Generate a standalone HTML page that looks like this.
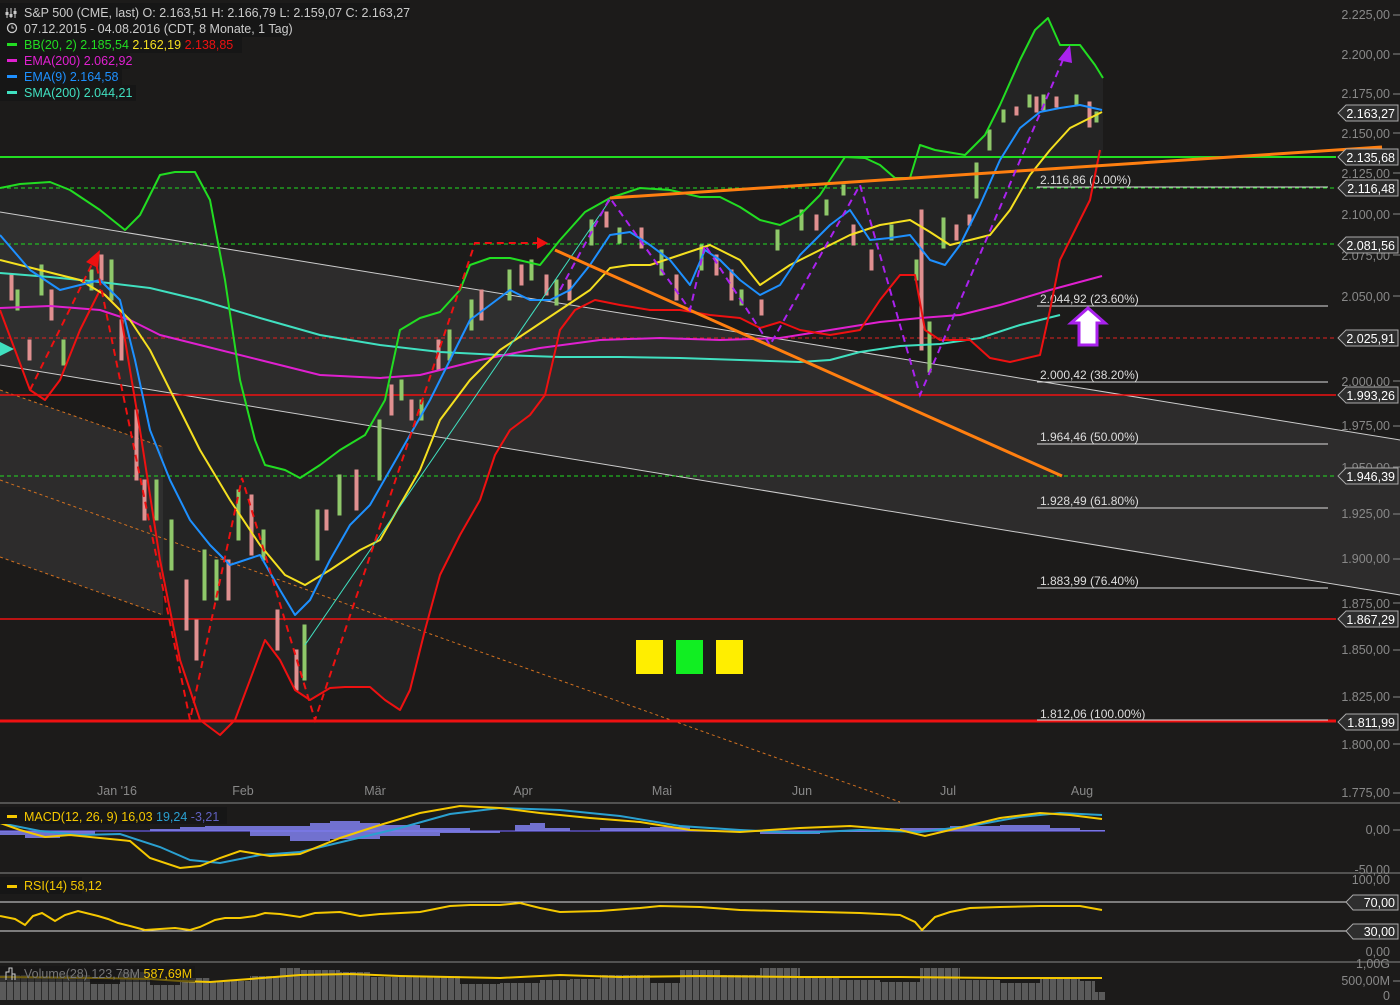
<!DOCTYPE html>
<html><head><meta charset="utf-8"><style>
body{margin:0;background:#1c1b1a;width:1400px;height:1000px;overflow:hidden;font-family:"Liberation Sans",sans-serif}
svg text{font-family:"Liberation Sans",sans-serif}
</style></head><body>
<svg width="1400" height="1000" viewBox="0 0 1400 1000" xmlns="http://www.w3.org/2000/svg">
<defs>
<pattern id="vb" width="7" height="40" patternUnits="userSpaceOnUse"><rect width="7" height="40" fill="#2a2a2a"/><rect x="0" width="6" height="40" fill="#5a5a5a"/></pattern>
</defs>
<rect width="1400" height="1000" fill="#1c1b1a"/>
<path d="M0,188 L20,184 50,182 70,190 100,210 125,230 140,215 160,175 175,172 195,172 210,200 225,280 240,380 255,440 265,465 285,470 300,478 320,465 340,450 365,435 385,400 400,330 420,318 440,312 460,290 470,265 490,258 510,258 540,265 560,240 585,212 610,198 640,188 670,190 700,197 720,197 740,207 760,220 780,225 800,215 820,195 845,157 865,158 880,165 895,178 910,178 920,145 935,150 965,155 985,135 1000,105 1020,60 1035,30 1048,18 1060,45 1080,45 1095,65 1103,78 L1103,150 1090,200 1075,230 1060,260 1050,310 1040,355 1010,362 990,358 970,340 940,340 925,330 915,275 900,275 880,300 860,330 830,335 800,330 780,322 760,328 740,318 710,315 680,310 650,310 620,305 595,300 575,310 560,330 545,395 530,415 510,430 495,455 480,500 460,535 440,575 425,630 410,690 400,710 385,700 370,687 345,687 330,688 310,700 295,690 280,660 265,640 250,680 235,720 220,735 200,720 180,660 160,560 140,430 130,370 120,310 100,290 80,330 60,380 45,400 30,390 15,350 0,310Z" fill="#242424"/>
<polygon points="0,212 1400,440 1400,595 0,365" fill="#333" fill-opacity="0.75"/>
<polygon points="0,390 163,447 163,615 0,557" fill="#333" fill-opacity="0.75"/>
<line x1="0" y1="212" x2="1400" y2="440" stroke="#ccc" stroke-width="1"/>
<line x1="0" y1="365" x2="1400" y2="595" stroke="#ccc" stroke-width="1"/>
<line x1="0" y1="390" x2="163" y2="447" stroke="#d07020" stroke-dasharray="3,3"/>
<line x1="0" y1="557" x2="163" y2="615" stroke="#d07020" stroke-dasharray="3,3"/>
<line x1="0" y1="480" x2="900" y2="802" stroke="#d07020" stroke-dasharray="3,3"/>
<line x1="0" y1="157" x2="1336" y2="157" stroke="#22dd22" stroke-width="2"/>
<line x1="0" y1="188" x2="1336" y2="188" stroke="#22dd22" stroke-dasharray="4,3"/>
<line x1="0" y1="476" x2="1336" y2="476" stroke="#22dd22" stroke-dasharray="4,3"/>
<line x1="0" y1="244" x2="1336" y2="244" stroke="#22dd22" stroke-dasharray="4,3"/>
<line x1="0" y1="338" x2="1336" y2="338" stroke="#e02020" stroke-dasharray="4,3"/>
<line x1="0" y1="395" x2="1336" y2="395" stroke="#ee1111" stroke-width="1.5"/>
<line x1="0" y1="619" x2="1336" y2="619" stroke="#ee1111" stroke-width="1.5"/>
<line x1="0" y1="721" x2="1336" y2="721" stroke="#ee1111" stroke-width="3"/>
<g stroke="#ddd" stroke-width="1">
<line x1="1037" y1="187" x2="1328" y2="187"/><line x1="1037" y1="306" x2="1328" y2="306"/><line x1="1037" y1="382" x2="1328" y2="382"/><line x1="1037" y1="444" x2="1328" y2="444"/><line x1="1037" y1="508" x2="1328" y2="508"/><line x1="1037" y1="588" x2="1328" y2="588"/><line x1="1037" y1="720" x2="1328" y2="720"/>
</g>
<g fill="#ddd" font-size="12">
<text x="1040" y="184">2.116,86 (0.00%)</text><text x="1040" y="303">2.044,92 (23.60%)</text><text x="1040" y="379">2.000,42 (38.20%)</text><text x="1040" y="441">1.964,46 (50.00%)</text><text x="1040" y="505">1.928,49 (61.80%)</text><text x="1040" y="585">1.883,99 (76.40%)</text><text x="1040" y="718">1.812,06 (100.00%)</text>
</g>
<g stroke-width="1">
<g fill="#8fc86a" stroke="#8fc86a">
<rect x="16" y="290" width="3" height="20"/><rect x="40" y="265" width="3" height="30"/><rect x="62" y="340" width="3" height="25"/><rect x="90" y="270" width="3" height="20"/><rect x="110" y="260" width="3" height="40"/><rect x="155" y="480" width="3" height="40"/><rect x="170" y="520" width="3" height="50"/><rect x="203" y="550" width="3" height="50"/><rect x="215" y="560" width="3" height="40"/><rect x="237" y="490" width="3" height="50"/><rect x="262" y="530" width="3" height="30"/><rect x="303" y="625" width="3" height="55"/><rect x="316" y="510" width="3" height="50"/><rect x="338" y="475" width="3" height="40"/><rect x="378" y="420" width="3" height="60"/><rect x="400" y="380" width="3" height="20"/><rect x="420" y="400" width="3" height="20"/><rect x="448" y="330" width="3" height="30"/><rect x="470" y="300" width="3" height="30"/><rect x="508" y="270" width="3" height="30"/><rect x="530" y="260" width="3" height="20"/><rect x="555" y="280" width="3" height="25"/><rect x="590" y="220" width="3" height="25"/><rect x="618" y="228" width="3" height="15"/><rect x="660" y="250" width="3" height="25"/><rect x="700" y="245" width="3" height="25"/><rect x="740" y="290" width="3" height="15"/><rect x="776" y="230" width="3" height="20"/><rect x="800" y="210" width="3" height="20"/><rect x="825" y="200" width="3" height="15"/><rect x="842" y="185" width="3" height="10"/><rect x="890" y="225" width="3" height="15"/><rect x="915" y="260" width="3" height="20"/><rect x="928" y="322" width="3" height="50"/><rect x="942" y="218" width="3" height="30"/><rect x="975" y="163" width="3" height="35"/><rect x="988" y="130" width="3" height="20"/><rect x="1002" y="110" width="3" height="12"/><rect x="1028" y="95" width="3" height="12"/><rect x="1042" y="95" width="3" height="15"/><rect x="1075" y="95" width="3" height="10"/><rect x="1095" y="112" width="3" height="10"/>
</g>
<g fill="#e09090" stroke="#e09090">
<rect x="10" y="275" width="3" height="25"/><rect x="28" y="340" width="3" height="20"/><rect x="50" y="290" width="3" height="30"/><rect x="100" y="255" width="3" height="25"/><rect x="120" y="320" width="3" height="40"/><rect x="135" y="410" width="3" height="70"/><rect x="143" y="480" width="3" height="40"/><rect x="185" y="580" width="3" height="50"/><rect x="195" y="620" width="3" height="40"/><rect x="227" y="560" width="3" height="40"/><rect x="250" y="495" width="3" height="60"/><rect x="276" y="610" width="3" height="40"/><rect x="295" y="650" width="3" height="40"/><rect x="325" y="510" width="3" height="20"/><rect x="355" y="470" width="3" height="40"/><rect x="390" y="385" width="3" height="30"/><rect x="410" y="400" width="3" height="20"/><rect x="437" y="340" width="3" height="30"/><rect x="480" y="290" width="3" height="30"/><rect x="520" y="265" width="3" height="20"/><rect x="545" y="275" width="3" height="20"/><rect x="568" y="280" width="3" height="20"/><rect x="605" y="212" width="3" height="15"/><rect x="640" y="228" width="3" height="20"/><rect x="675" y="275" width="3" height="25"/><rect x="715" y="255" width="3" height="20"/><rect x="730" y="270" width="3" height="30"/><rect x="760" y="300" width="3" height="15"/><rect x="815" y="215" width="3" height="15"/><rect x="852" y="225" width="3" height="20"/><rect x="870" y="250" width="3" height="20"/><rect x="920" y="210" width="3" height="140"/><rect x="955" y="225" width="3" height="15"/><rect x="968" y="215" width="3" height="10"/><rect x="1015" y="107" width="3" height="8"/><rect x="1035" y="97" width="3" height="15"/><rect x="1055" y="97" width="3" height="10"/><rect x="1088" y="102" width="3" height="25"/>
</g>
</g>
<g fill="none" stroke-width="2" stroke-linejoin="round">
<polyline stroke="#40e0c0" points="0,273 50,277 100,282 150,288 200,300 260,318 320,335 380,345 440,352 500,355 560,357 620,357 680,358 740,360 800,362 830,360 860,352 900,346 940,344 980,338 1020,325 1060,315"/>
<polyline stroke="#e020d0" points="0,308 50,306 100,310 130,320 160,335 200,345 260,360 320,375 380,378 420,375 480,360 540,348 600,340 660,338 720,340 780,338 830,330 880,322 920,318 960,315 1000,305 1050,290 1102,276"/>
<polyline stroke="#22dd22" points="0,188 20,184 50,182 70,190 100,210 125,230 140,215 160,175 175,172 195,172 210,200 225,280 240,380 255,440 265,465 285,470 300,478 320,465 340,450 365,435 385,400 400,330 420,318 440,312 460,290 470,265 490,258 510,258 540,265 560,240 585,212 610,198 640,188 670,190 700,197 720,197 740,207 760,220 780,225 800,215 820,195 845,157 865,158 880,165 895,178 910,178 920,145 935,150 965,155 985,135 1000,105 1020,60 1035,30 1048,18 1060,45 1080,45 1095,65 1103,78"/>
<polyline stroke="#ee1111" points="0,310 15,350 30,390 45,400 60,380 80,330 100,290 120,310 130,370 140,430 160,560 180,660 200,720 220,735 235,720 250,680 265,640 280,660 295,690 310,700 330,688 345,687 370,687 385,700 400,710 410,690 425,630 440,575 460,535 480,500 495,455 510,430 530,415 545,395 560,330 575,310 595,300 620,305 650,310 680,310 710,315 740,318 760,328 780,322 800,330 830,335 860,330 880,300 900,275 915,275 925,330 940,340 970,340 990,358 1010,362 1040,355 1050,310 1060,260 1075,230 1090,200 1100,150"/>
<polyline stroke="#f5e020" points="0,260 40,270 80,280 105,295 130,320 150,350 175,400 200,450 230,500 260,545 285,575 305,585 330,570 360,550 380,540 400,505 420,470 440,420 470,380 500,350 530,330 560,310 590,290 610,268 630,265 650,265 680,255 710,245 740,260 760,285 790,265 820,250 850,235 880,225 910,220 930,232 950,245 970,240 990,235 1010,210 1030,175 1050,150 1070,128 1090,118 1102,112"/>
<polyline stroke="#1e90ff" points="0,235 30,270 60,290 80,285 100,280 120,300 135,360 150,430 170,480 190,520 210,545 230,565 260,555 280,590 295,615 310,600 330,560 350,525 370,505 390,470 410,435 430,400 450,360 470,320 490,305 510,290 530,300 550,300 570,290 590,265 610,235 630,232 650,245 670,260 690,285 705,250 720,260 740,280 760,295 780,285 800,255 830,225 850,210 870,240 890,238 910,235 930,260 945,265 960,245 980,205 1000,160 1020,128 1040,112 1060,108 1080,105 1102,110"/>
</g>
<line x1="305" y1="645" x2="610" y2="200" stroke="#40e0c0" stroke-width="1"/>
<line x1="610" y1="198" x2="1382" y2="147" stroke="#ff7f10" stroke-width="3"/>
<line x1="555" y1="250" x2="1062" y2="476" stroke="#ff7f10" stroke-width="3"/>
<polyline fill="none" stroke="#ee1111" stroke-width="2" stroke-dasharray="7,5" points="30,390 95,258 190,720 242,478 315,720 475,243 540,243"/>
<polygon points="86,262 100,250 98,268" fill="#ee1111"/>
<polygon points="537,237 548,243 537,249" fill="#ee1111"/>
<polyline fill="none" stroke="#aa22ee" stroke-width="2" stroke-dasharray="7,5" points="560,290 610,198 690,310 705,245 770,345 860,185 920,395 1065,55"/>
<polygon points="1058,60 1070,45 1072,63" fill="#aa22ee"/>
<path d="M1088,308 L1105,323 L1097,323 L1097,345 L1079,345 L1079,323 L1071,323Z" fill="#fff" stroke="#aa22ee" stroke-width="3"/>
<polygon points="0,342 0,356 14,349" fill="#40e0c0"/>
<rect x="636" y="640" width="27" height="34" fill="#ffee00"/>
<rect x="676" y="640" width="27" height="34" fill="#11ee22"/>
<rect x="716" y="640" width="27" height="34" fill="#ffee00"/>
<rect x="0" y="3" width="410" height="17" fill="#161616"/>
<rect x="0" y="20" width="290" height="17" fill="#161616"/>
<rect x="0" y="37" width="242" height="16" fill="#161616"/>
<rect x="0" y="53" width="130" height="16" fill="#161616"/>
<rect x="0" y="69" width="122" height="16" fill="#161616"/>
<rect x="0" y="85" width="136" height="16" fill="#161616"/>
<g font-size="12.5">
<path d="M7,8 V18 M11,8 V18 M15,8 V18" stroke="#ccc"/><rect x="5.5" y="12" width="3" height="3" fill="#ccc"/><rect x="9.5" y="14" width="3" height="3" fill="#ccc"/><rect x="13.5" y="11" width="3" height="3" fill="#ccc"/>
<text x="24" y="17" fill="#ccc">S&amp;P 500 (CME, last)  O: 2.163,51  H: 2.166,79  L: 2.159,07  C: 2.163,27</text>
<circle cx="12" cy="28" r="4.5" fill="none" stroke="#ccc" stroke-width="1.3"/><path d="M12,25.5 V28 H14" stroke="#ccc" fill="none"/>
<text x="24" y="33" fill="#ccc">07.12.2015 - 04.08.2016 (CDT, 8 Monate, 1 Tag)</text>
<rect x="7" y="43" width="10" height="3" fill="#22dd22"/><text x="24" y="49" fill="#22dd22">BB(20, 2)  2.185,54 <tspan fill="#f5e020">2.162,19</tspan> <tspan fill="#ee1111">2.138,85</tspan></text>
<rect x="7" y="59" width="10" height="3" fill="#e020d0"/><text x="24" y="65" fill="#e020d0">EMA(200)  2.062,92</text>
<rect x="7" y="75" width="10" height="3" fill="#1e90ff"/><text x="24" y="81" fill="#1e90ff">EMA(9)  2.164,58</text>
<rect x="7" y="91" width="10" height="3" fill="#40e0c0"/><text x="24" y="97" fill="#40e0c0">SMA(200)  2.044,21</text>
</g>
<g fill="#888" font-size="12.5" text-anchor="end">
<text x="1390" y="19">2.225,00</text><text x="1390" y="59">2.200,00</text><text x="1390" y="98">2.175,00</text><text x="1390" y="138">2.150,00</text><text x="1390" y="178">2.125,00</text><text x="1390" y="219">2.100,00</text><text x="1390" y="260">2.075,00</text><text x="1390" y="301">2.050,00</text><text x="1390" y="386">2.000,00</text><text x="1390" y="430">1.975,00</text><text x="1390" y="472">1.950,00</text><text x="1390" y="518">1.925,00</text><text x="1390" y="563">1.900,00</text><text x="1390" y="608">1.875,00</text><text x="1390" y="654">1.850,00</text><text x="1390" y="701">1.825,00</text><text x="1390" y="749">1.800,00</text><text x="1390" y="797">1.775,00</text>
<text x="1390" y="834">0,00</text><text x="1390" y="874">-50,00</text><text x="1390" y="884">100,00</text><text x="1390" y="956">0,00</text><text x="1390" y="968">1,00G</text><text x="1390" y="985">500,00M</text><text x="1390" y="1000">0</text>
</g>
<g stroke="#888"><path d="M1393,15H1400M1393,54H1400M1393,94H1400M1393,133H1400M1393,173H1400M1393,214H1400M1393,255H1400M1393,296H1400M1393,381H1400M1393,426H1400M1393,467H1400M1393,514H1400M1393,559H1400M1393,603H1400M1393,650H1400M1393,697H1400M1393,744H1400M1393,793H1400M1393,830H1400M1393,981H1400"/></g>
<g fill="#2e2e2e" stroke="#aaa" stroke-width="1">
<path d="M1346,105 H1398 V121 H1346 L1338,113Z"/><path d="M1346,149 H1398 V165 H1346 L1338,157Z"/><path d="M1346,180 H1398 V196 H1346 L1338,188Z"/><path d="M1346,237 H1398 V253 H1346 L1338,245Z"/><path d="M1346,330 H1398 V346 H1346 L1338,338Z"/><path d="M1346,387 H1398 V403 H1346 L1338,395Z"/><path d="M1346,468 H1398 V484 H1346 L1338,476Z"/><path d="M1346,611 H1398 V627 H1346 L1338,619Z"/><path d="M1346,714 H1398 V730 H1346 L1338,722Z"/>
<path d="M1353,895 H1398 V910 H1353 L1346,902Z"/><path d="M1353,924 H1398 V939 H1353 L1346,931Z"/>
</g>
<g fill="#fff" font-size="12.5" text-anchor="end">
<text x="1395" y="118">2.163,27</text><text x="1395" y="162">2.135,68</text><text x="1395" y="193">2.116,48</text><text x="1395" y="250">2.081,56</text><text x="1395" y="343">2.025,91</text><text x="1395" y="400">1.993,26</text><text x="1395" y="481">1.946,39</text><text x="1395" y="624">1.867,29</text><text x="1395" y="727">1.811,99</text><text x="1395" y="907">70,00</text><text x="1395" y="936">30,00</text>
</g>
<g fill="#888" font-size="12.5" text-anchor="middle">
<text x="117" y="795">Jan '16</text><text x="243" y="795">Feb</text><text x="375" y="795">Mär</text><text x="523" y="795">Apr</text><text x="662" y="795">Mai</text><text x="802" y="795">Jun</text><text x="948" y="795">Jul</text><text x="1082" y="795">Aug</text>
</g>
<line x1="0" y1="803" x2="1400" y2="803" stroke="#888"/>
<line x1="0" y1="873" x2="1400" y2="873" stroke="#888"/>
<line x1="0" y1="962" x2="1400" y2="962" stroke="#888"/>
<path d="M0,831 H1105" stroke="#5a50c0" stroke-width="1.5"/>
<path d="M0,831 V835 H25 V838 H60 V835 H95 V831 H150 V829 H180 V827 H205 V826 H235 V831 H250 V836 H290 V841 H330 V839 H380 V836 H440 V833 H500 V831 H515 V825 H530 V823 H545 V828 H570 V831 H600 V828 H650 V827 H690 V831 H720 V832 H760 V834 H820 V832 H880 V831 H900 V828 H950 V826 H1000 V825 H1050 V828 H1080 V830 H1105 V831 Z" fill="#8080f0" fill-opacity="0.85"/>
<path d="M235,826 H310 V823 H330 V821 H360 V823 H380 V825 H420 V828 H470 V831 H235Z" fill="#8080f0" fill-opacity="0.85"/>
<polyline fill="none" stroke="#2aa0d0" stroke-width="2" points="0,823 40,831 80,835 120,834 160,847 190,860 220,863 260,855 300,852 350,840 400,828 450,814 500,808 560,810 620,816 680,826 740,830 800,833 860,830 920,832 970,826 1020,817 1060,813 1102,815"/>
<polyline fill="none" stroke="#f5c800" stroke-width="2" points="0,823 20,830 45,837 70,835 100,838 130,841 150,858 180,868 200,866 220,858 240,851 270,856 300,854 340,838 380,825 420,813 460,806 500,808 540,813 590,818 640,822 690,830 740,832 800,828 850,826 900,830 925,836 950,830 1000,818 1040,813 1070,815 1102,819"/>
<rect x="0" y="807" width="227" height="17" fill="#161616"/>
<rect x="7" y="815" width="10" height="3" fill="#f5c800"/>
<text x="24" y="821" font-size="12.5" fill="#f5c800">MACD(12, 26, 9)  16,03 <tspan fill="#2aa0d0">19,24</tspan> <tspan fill="#6060c0">-3,21</tspan></text>
<line x1="0" y1="902" x2="1346" y2="902" stroke="#ddd"/>
<line x1="0" y1="931" x2="1346" y2="931" stroke="#ddd"/>
<polyline fill="none" stroke="#f5c800" stroke-width="2" points="0,916 15,919 25,925 33,916 42,913 55,921 65,915 78,911 98,916 108,919 118,923 130,926 145,930 160,929 175,928 190,930 200,927 215,920 225,918 240,918 255,916 265,913 280,914 300,917 315,913 340,912 360,916 380,914 420,912 450,906 470,905 500,905 520,903 540,908 560,912 600,911 640,908 660,906 700,907 740,910 780,911 820,912 860,913 900,915 915,922 922,930 935,917 950,912 970,908 1000,907 1040,906 1080,906 1102,910"/>
<rect x="0" y="877" width="82" height="17" fill="#161616"/>
<rect x="7" y="885" width="10" height="3" fill="#f5c800"/>
<text x="24" y="890" font-size="12.5" fill="#f5c800">RSI(14)  58,12</text>
<path d="M0,1000 V975 H30 V978 H60 V975 H90 V984 H120 V972 H150 V985 H180 V978 H210 V981 H250 V976 H280 V968 H300 V970 H340 V972 H370 V977 H410 V976 H460 V984 H500 V983 H540 V980 H570 V979 H600 V975 H650 V983 H680 V970 H720 V975 H760 V968 H800 V977 H840 V980 H880 V982 H920 V968 H960 V980 H1000 V983 H1040 V978 H1080 V981 H1095 V992 H1105 V1000 Z" fill="url(#vb)"/>
<polyline fill="none" stroke="#f5c800" stroke-width="2" points="0,977 100,978 150,979 180,981 210,982 250,979 300,975 350,974 400,976 500,978 560,975 620,977 700,976 800,977 900,977 1000,978 1102,978"/>
<rect x="0" y="966" width="195" height="16" fill="#161616" fill-opacity="0.6"/>
<path d="M6,980 V972 H9 V968 H12 V980 M12,974 H15 V980" stroke="#ccc" fill="none"/>
<text x="24" y="978" font-size="12.5" fill="#777">Volume(28)  123,78M  <tspan fill="#f5c800">587,69M</tspan></text>
</svg>
</body></html>
